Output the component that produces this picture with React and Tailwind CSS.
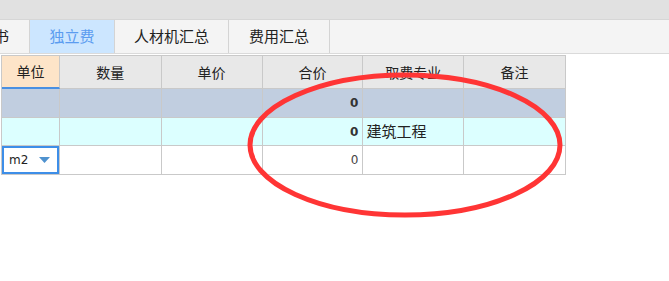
import React from "react";

const cjk = { fontFamily: '"Noto Sans CJK SC", "Noto Sans", sans-serif' };
const num = { fontFamily: '"DejaVu Sans", "Liberation Sans", sans-serif' };

export default function App() {
  const headers = ["单位", "数量", "单价", "合价", "取费专业", "备注"];
  const widths = ["w-[58px]", "w-[102px]", "w-[101px]", "w-[101px]", "w-[101px]", "w-[102px]"];
  return (
    <div className="relative w-[669px] h-[281px] bg-white overflow-hidden" style={cjk}>
      <div className="h-[20px] bg-[#e1e1e1] border-b border-[#d6d6d6]" />
      <div className="flex h-[34px] bg-[#f4f4f4] border-b border-[#dadada] text-[15px] text-[#222]">
        <div className="w-[30px] flex justify-end items-center overflow-hidden whitespace-nowrap pr-[20px] border-r border-[#d4d4d4]">
          预算书
        </div>
        <div className="w-[85px] flex justify-center items-center bg-[#cce6ff] text-[#5b9cf0] border-r border-[#d4d4d4]">
          独立费
        </div>
        <div className="w-[114px] flex justify-center items-center border-r border-[#d4d4d4]">
          人材机汇总
        </div>
        <div className="w-[101px] flex justify-center items-center border-r border-[#d4d4d4]">
          费用汇总
        </div>
      </div>
      <div className="mt-[1px] ml-[1px] w-[565px] border-l border-t border-[#c9c9c9] text-[14px] text-[#222]">
        <div className="flex h-[33px]">
          {headers.map((h, i) => (
            <div
              key={h}
              className={`${widths[i]} flex items-center justify-center border-r border-[#c9c9c9] ${
                i === 0 ? "bg-[#fde4c8] border-b-2 border-b-[#4a90e2]" : "bg-[#e8e8e8] border-b border-b-[#c9c9c9]"
              }`}
            >
              {h}
            </div>
          ))}
        </div>
        <div className="flex h-[29px] bg-[#c1cee0]">
          {widths.map((w, i) => (
            <div key={i} className={`${w} flex items-center justify-end pr-[4px] border-r border-b border-[#c9c9c9] text-[12px] font-bold text-[#333]`} style={num}>
              {i === 3 ? "0" : ""}
            </div>
          ))}
        </div>
        <div className="flex h-[28px] bg-[#dcffff]">
          {widths.map((w, i) => (
            <div
              key={i}
              className={`${w} flex items-center border-r border-b border-[#c9c9c9] ${i === 4 ? "justify-start pl-[3px] text-[15px]" : "justify-end pr-[4px] text-[12px] font-bold text-[#333]"}`}
              style={i === 4 ? cjk : num}
            >
              {i === 3 ? "0" : i === 4 ? "建筑工程" : ""}
            </div>
          ))}
        </div>
        <div className="flex h-[29px] bg-white">
          {widths.map((w, i) =>
            i === 0 ? (
              <div key={i} className={`${w} border-r border-b border-[#c9c9c9] p-0`}>
                <div className="h-full flex items-center justify-between border-2 border-[#3d8ee8] pl-[5px] pr-[7px] text-[12px] text-[#222]" style={num}>
                  <span>m2</span>
                  <svg width="11" height="6" viewBox="0 0 11 6">
                    <polygon points="0,0 11,0 5.5,6" fill="#4f92cf" />
                  </svg>
                </div>
              </div>
            ) : (
              <div key={i} className={`${w} flex items-center justify-end pr-[4px] border-r border-b border-[#c9c9c9] text-[12px] text-[#444]`} style={num}>
                {i === 3 ? "0" : ""}
              </div>
            )
          )}
        </div>
      </div>
      <svg className="absolute left-0 top-0 pointer-events-none" width="669" height="281">
        <ellipse cx="405" cy="145" rx="155" ry="70" fill="none" stroke="#ff3535" strokeWidth="5" />
      </svg>
    </div>
  );
}
